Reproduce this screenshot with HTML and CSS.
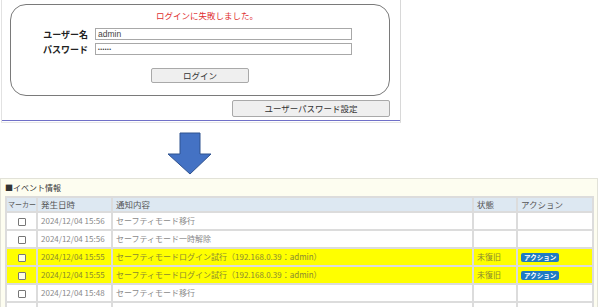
FILE: index.html
```html
<!DOCTYPE html>
<html lang="ja">
<head>
    <meta charset="UTF-8">
    <title>ログイン失敗とイベント情報</title>
    <link rel="stylesheet" href="styles.css">
</head>
<body>
  <div class="login-panel">
    <div class="login-box">
      <p class="error">ログインに失敗しました。</p>
      <div class="form-row">
        <span class="label">ユーザー名</span>
        <div class="input">admin</div>
      </div>
      <div class="form-row">
        <span class="label">パスワード</span>
        <div class="input pw">••••••</div>
      </div>
      <div class="btn-row">
        <div class="btn login-btn">ログイン</div>
      </div>
    </div>
    <div class="setting-row">
      <div class="btn setting-btn">ユーザーパスワード設定</div>
    </div>
    <div class="blue-line"></div>
  </div>

  <div class="arrow-area">
    <svg class="arrow" width="45" height="44" viewBox="0 0 45 44">
      <polygon points="13,1 33,1 33,22 44,22 23,42 1,22 13,22" fill="#4472c4" stroke="#2f528f" stroke-width="1"/>
    </svg>
  </div>

  <div class="event-panel">
    <p class="event-title">■イベント情報</p>
    <table class="event-table">
      <colgroup>
        <col class="c-mark"><col class="c-date"><col class="c-msg"><col class="c-state"><col class="c-act">
      </colgroup>
      <tr class="head">
        <th>マーカー</th><th>発生日時</th><th>通知内容</th><th>状態</th><th>アクション</th>
      </tr>
      <tr>
        <td class="mark"><span class="check"></span></td>
        <td>2024/12/04 15:56</td><td>セーフティモード移行</td><td></td><td></td>
      </tr>
      <tr>
        <td class="mark"><span class="check"></span></td>
        <td>2024/12/04 15:56</td><td>セーフティモード一時解除</td><td></td><td></td>
      </tr>
      <tr class="alert">
        <td class="mark"><span class="check"></span></td>
        <td>2024/12/04 15:55</td><td>セーフティモードログイン試行（192.168.0.39：admin）</td><td>未復旧</td>
        <td><span class="action">アクション</span></td>
      </tr>
      <tr class="alert">
        <td class="mark"><span class="check"></span></td>
        <td>2024/12/04 15:55</td><td>セーフティモードログイン試行（192.168.0.39：admin）</td><td>未復旧</td>
        <td><span class="action">アクション</span></td>
      </tr>
      <tr>
        <td class="mark"><span class="check"></span></td>
        <td>2024/12/04 15:48</td><td>セーフティモード移行</td><td></td><td></td>
      </tr>
      <tr>
        <td class="mark"><span class="check"></span></td>
        <td></td><td></td><td></td><td></td>
      </tr>
    </table>
  </div>
</body>
</html>
```

FILE: styles.css
```css
*{
    margin: 0;
    padding: 0;
    box-sizing: border-box;
}
body{
    font-family: "Noto Sans CJK JP", "Liberation Sans", sans-serif;
    background: #fff;
    overflow: hidden;
}
.login-panel{
    width: 400px;
    height: 123px;
    margin-left: 1px;
    border-left: 1px solid #e2e2e2;
    border-right: 1px solid #d8d8d8;
    border-bottom: 1px solid #e6e6e6;
    padding-top: 4px;
}
.login-box{
    margin-left: 8px;
    width: 380px;
    height: 92px;
    border: 1px solid #7a7a7a;
    border-radius: 16px;
    padding-top: 5px;
}
.error{
    text-align: center;
    color: #e03030;
    font-size: 8.5px;
    line-height: 11px;
    margin-left: 14px;
    margin-bottom: 7px;
}
.form-row{
    display: flex;
    align-items: center;
    height: 12px;
    margin-bottom: 3px;
}
.label{
    width: 77px;
    text-align: right;
    font-size: 9px;
    font-weight: bold;
    color: #222;
}
.input{
    margin-left: 7px;
    width: 257px;
    height: 12px;
    border: 1px solid #a8a8a8;
    font-family: "Liberation Sans", sans-serif;
    font-size: 8.5px;
    line-height: 10px;
    padding-left: 2px;
    color: #444;
}
.pw{
    font-size: 5px;
    letter-spacing: 0.5px;
    color: #333;
}
.btn-row{
    display: flex;
    justify-content: center;
    margin-top: 13px;
}
.btn{
    background: #efefef;
    border: 1px solid #a9a9a9;
    border-radius: 2px;
    font-size: 8.5px;
    color: #333;
    text-align: center;
}
.login-btn{
    width: 98px;
    height: 15px;
    line-height: 13px;
}
.setting-row{
    display: flex;
    justify-content: flex-end;
    width: 388px;
    margin-top: 4px;
}
.setting-btn{
    width: 158px;
    height: 17px;
    line-height: 15px;
}
.blue-line{
    margin-top: 3px;
    height: 1px;
    background: #7070c8;
}
.arrow-area{
    height: 55px;
    padding-left: 167px;
    padding-top: 9px;
}
.arrow{
    display: block;
}
.event-panel{
    width: 598px;
    height: 140px;
    background: #fdfdf0;
    border: 1px solid #e2e2d8;
    padding-left: 4px;
}
.event-title{
    font-size: 8px;
    line-height: 16px;
    color: #333;
    padding-top: 1px;
}
.event-table{
    border-collapse: collapse;
    width: 587px;
    table-layout: fixed;
    background: #fff;
}
.c-mark{ width: 31px; }
.c-date{ width: 75px; }
.c-msg{ width: 361px; }
.c-state{ width: 44px; }
.c-act{ width: 76px; }
.event-table th,
.event-table td{
    border: 2px solid #dcdcdc;
    text-align: left;
    font-weight: normal;
    padding-left: 3px;
    white-space: nowrap;
    overflow: hidden;
}
.event-table th{
    background: #dde8f2;
    height: 15px;
    font-size: 8.5px;
    color: #555;
    line-height: 11px;
}
.event-table th:first-child{
    font-size: 7px;
    padding-left: 1px;
}
.event-table td{
    height: 18px;
    font-size: 8px;
    color: #8a8a8a;
    line-height: 12px;
}
.event-table td.mark{
    text-align: center;
    padding-left: 0;
}
.check{
    display: inline-block;
    width: 8px;
    height: 8px;
    border: 1px solid #777;
    border-radius: 1px;
    background: #fff;
    vertical-align: middle;
}
.alert td{
    background: #ffff00;
    color: #8a8a30;
}
.alert td.mark .check{
    background: #ffffe0;
}
.action{
    display: inline-block;
    background: #1f7ac2;
    color: #fff;
    font-size: 6.5px;
    font-weight: bold;
    line-height: 9px;
    padding: 0 3px;
    border-radius: 2px;
    vertical-align: middle;
}
```
